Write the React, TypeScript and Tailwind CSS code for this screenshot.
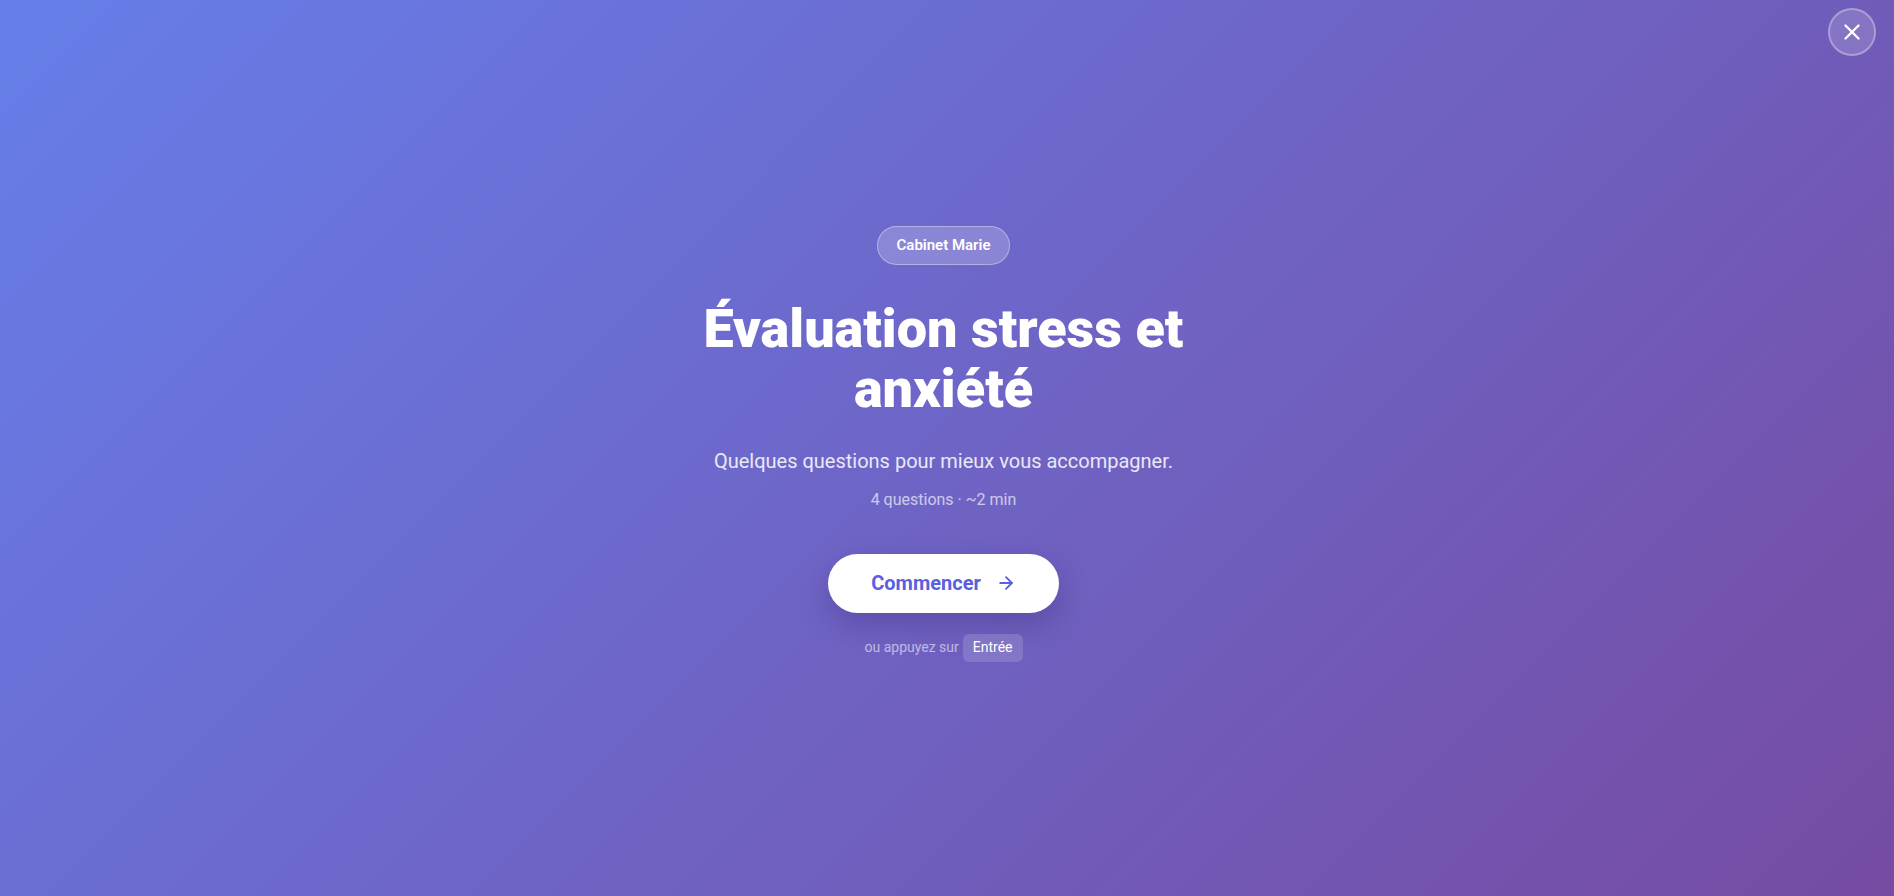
import { ArrowRight, X } from "lucide-react";

export default function App() {
  return (
    <div
      className="relative min-h-screen w-full bg-[linear-gradient(135deg,#667eea_0%,#764ba2_100%)] text-white"
      style={{ fontFamily: "Roboto, 'Noto Sans', sans-serif" }}
    >
      {/* fermer */}
      <button className="absolute top-2 right-[18px] w-12 h-12 rounded-full bg-white/15 border-2 border-white/30 flex items-center justify-center">
        <X size={26} strokeWidth={2.2} className="text-white" />
      </button>

      <main className="min-h-screen flex flex-col items-center justify-center pr-[7px] pb-[9px]">
        <div className="h-[39px] px-[19px] rounded-full bg-white/20 border border-white/35 flex items-center text-[15px] font-semibold">
          Cabinet Marie
        </div>

        <h1 className="mt-[34px] max-w-[600px] text-center text-[54px] leading-[60px] font-black">
          Évaluation stress et anxiété
        </h1>
        <p className="mt-[28px] text-[20px] leading-[28px] text-white/85">
          Quelques questions pour mieux vous accompagner.
        </p>
        <p className="mt-[13px] text-[16px] leading-[24px] text-white/65">
          4 questions · ~2 min
        </p>

        <button className="mt-[42px] h-[59px] w-[231px] rounded-full bg-white flex items-center justify-center gap-[15px] text-[#5a5fe0] text-[20px] font-bold shadow-[0_12px_30px_rgba(40,20,90,0.25)]">
          <span>Commencer</span>
          <ArrowRight size={20} strokeWidth={2.2} />
        </button>

        <div className="mt-[21px] flex items-center gap-[4px] text-[14px]">
          <span className="text-white/55">ou appuyez sur</span>
          <span className="h-[28px] px-[10px] rounded-md bg-white/15 flex items-center text-white">
            Entrée
          </span>
        </div>
      </main>
    </div>
  );
}
